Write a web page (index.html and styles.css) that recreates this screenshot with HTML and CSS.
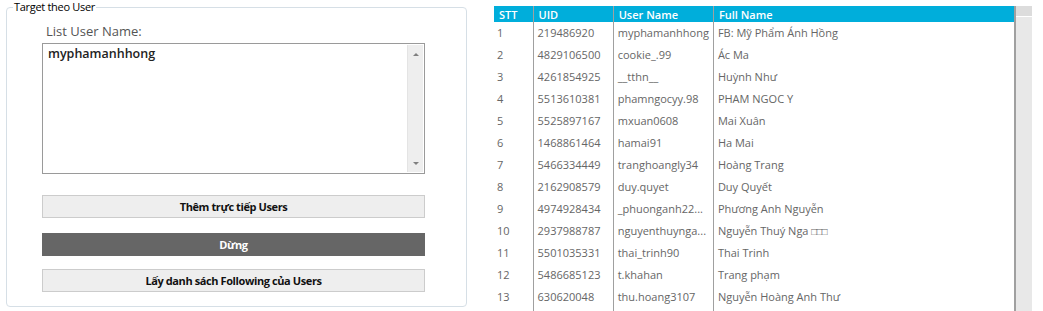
FILE: index.html
```html
<!DOCTYPE html>
<html lang="vi">
<head>
    <meta charset="UTF-8">
    <title>Target theo User</title>
    <link rel="stylesheet" href="styles.css">
</head>
<body>
    <div class="page">
        <fieldset class="group">
            <legend class="group-title">Target theo User</legend>
            <label class="list-label">List User Name:</label>
            <div class="userbox">
                <div class="userbox-text">myphamanhhong</div>
                <div class="vscroll">
                    <span class="arrow-up"></span>
                    <span class="arrow-down"></span>
                </div>
            </div>
            <button class="btn btn-first">Thêm trực tiếp Users</button>
            <button class="btn btn-dark">Dừng</button>
            <button class="btn">Lấy danh sách Following của Users</button>
        </fieldset>

        <div class="grid-wrap">
            <table class="grid">
                <colgroup>
                    <col class="c-stt">
                    <col class="c-uid">
                    <col class="c-user">
                    <col class="c-full">
                </colgroup>
                <thead>
                    <tr>
                        <th>STT</th>
                        <th>UID</th>
                        <th>User Name</th>
                        <th>Full Name</th>
                    </tr>
                </thead>
                <tbody>
                    <tr><td>1</td><td>219486920</td><td>myphamanhhong</td><td>FB: Mỹ Phẩm Ánh Hồng</td></tr>
                    <tr><td>2</td><td>4829106500</td><td>cookie_.99</td><td>Ác Ma</td></tr>
                    <tr><td>3</td><td>4261854925</td><td>__tthn__</td><td>Huỳnh Như</td></tr>
                    <tr><td>4</td><td>5513610381</td><td>phamngocyy.98</td><td>PHAM NGOC Y</td></tr>
                    <tr><td>5</td><td>5525897167</td><td>mxuan0608</td><td>Mai Xuân</td></tr>
                    <tr><td>6</td><td>1468861464</td><td>hamai91</td><td>Ha Mai</td></tr>
                    <tr><td>7</td><td>5466334449</td><td>tranghoangly34</td><td>Hoàng Trang</td></tr>
                    <tr><td>8</td><td>2162908579</td><td>duy.quyet</td><td>Duy Quyết</td></tr>
                    <tr><td>9</td><td>4974928434</td><td>_phuonganh22...</td><td>Phương Anh Nguyễn</td></tr>
                    <tr><td>10</td><td>2937988787</td><td>nguyenthuynga...</td><td>Nguyễn Thuý Nga <span class="box">□□□</span></td></tr>
                    <tr><td>11</td><td>5501035331</td><td>thai_trinh90</td><td>Thai Trinh</td></tr>
                    <tr><td>12</td><td>5486685123</td><td>t.khahan</td><td>Trang phạm</td></tr>
                    <tr><td>13</td><td>630620048</td><td>thu.hoang3107</td><td>Nguyễn Hoàng Anh Thư</td></tr>
                    <tr class="filler"><td></td><td></td><td></td><td></td></tr>
                </tbody>
            </table>
            <div class="grid-scroll">
                <div class="grid-scroll-head"></div>
            </div>
        </div>
    </div>
</body>
</html>
```

FILE: styles.css
```css
body {
    margin: 0;
    background: #ffffff;
    font-family: "Open Sans", "Noto Sans", sans-serif;
    overflow: hidden;
}
.page {
    display: flex;
    align-items: flex-start;
    height: 311px;
    overflow: hidden;
}

/* left group */
.group {
    flex-shrink: 0;
    margin: 0 0 0 6px;
    width: 461px;
    height: 307px;
    box-sizing: border-box;
    border: 1px solid #d6dfe6;
    border-radius: 4px;
    padding: 0;
    display: flex;
    flex-direction: column;
    align-items: flex-start;
}
.group-title {
    font-size: 11px;
    line-height: 14px;
    color: #000;
    padding: 0 1px;
    margin-left: 6px;
    letter-spacing: -0.3px;
}
.list-label {
    font-size: 13px;
    color: #555;
    margin: 9px 0 0 39px;
    line-height: 16px;
}
.userbox {
    margin: 4px 0 0 35px;
    width: 383px;
    height: 131px;
    box-sizing: border-box;
    border: 1px solid #9a9a9a;
    display: flex;
    justify-content: space-between;
}
.userbox-text {
    font-size: 12.5px;
    font-weight: 600;
    color: #222;
    padding: 2px 0 0 5px;
    line-height: 16px;
}
.vscroll {
    width: 16px;
    margin: 1px 1px 1px 0;
    background: #eeeeee;
    border-left: 1px solid #e4e4e4;
    display: flex;
    flex-direction: column;
    justify-content: space-between;
    align-items: center;
    padding: 8px 0 7px;
    box-sizing: border-box;
}
.arrow-up {
    width: 0;
    height: 0;
    border-left: 3px solid transparent;
    border-right: 3px solid transparent;
    border-bottom: 3px solid #808080;
}
.arrow-down {
    width: 0;
    height: 0;
    border-left: 3px solid transparent;
    border-right: 3px solid transparent;
    border-top: 3px solid #808080;
}
.btn {
    width: 383px;
    height: 23px;
    margin: 13px 0 0 35px;
    box-sizing: border-box;
    border: 1px solid #cccccc;
    background: #eeeeee;
    font-family: "Open Sans", "Noto Sans", sans-serif;
    font-size: 11px;
    font-weight: 700;
    color: #111;
    padding: 0;
    letter-spacing: -0.4px;
}
.btn-first {
    margin-top: 21px;
}
.btn-dark {
    margin-top: 15px;
    background: #666666;
    border-color: #666666;
    color: #ffffff;
}

/* right grid */
.grid-wrap {
    flex-shrink: 0;
    margin: 6px 0 0 27px;
    display: flex;
    height: 305px;
    overflow: hidden;
}
.grid {
    border-collapse: collapse;
    table-layout: fixed;
    width: 522px;
    border-right: 2px solid #a0a0a0;
    font-size: 11px;
    align-self: flex-start;
}
.grid th {
    background: #00aedb;
    color: #ffffff;
    font-weight: 600;
    height: 16px;
    padding: 0 0 0 5px;
    text-align: left;
    line-height: 15px;
    border-left: 1px solid #a0a0a0;
}
.grid th:first-child {
    border-left: none;
}
.grid td {
    height: 22px;
    padding: 0 0 0 4px;
    color: #666;
    line-height: 22px;
    white-space: nowrap;
    overflow: hidden;
    border-left: 1px solid #a0a0a0;
}
.grid td:first-child {
    border-left: none;
    padding-left: 3px;
}
.c-stt { width: 39px; }
.c-uid { width: 80px; }
.c-user { width: 100px; }
.c-full { width: 301px; }
.box {
    font-size: 10px;
    letter-spacing: -1px;
}
.grid-scroll {
    width: 16px;
    height: 305px;
    background: #e8e8e8;
}
.grid-scroll-head {
    height: 10px;
    background: #dcdcdc;
    border-bottom: 1px solid #ffffff;
}
```
